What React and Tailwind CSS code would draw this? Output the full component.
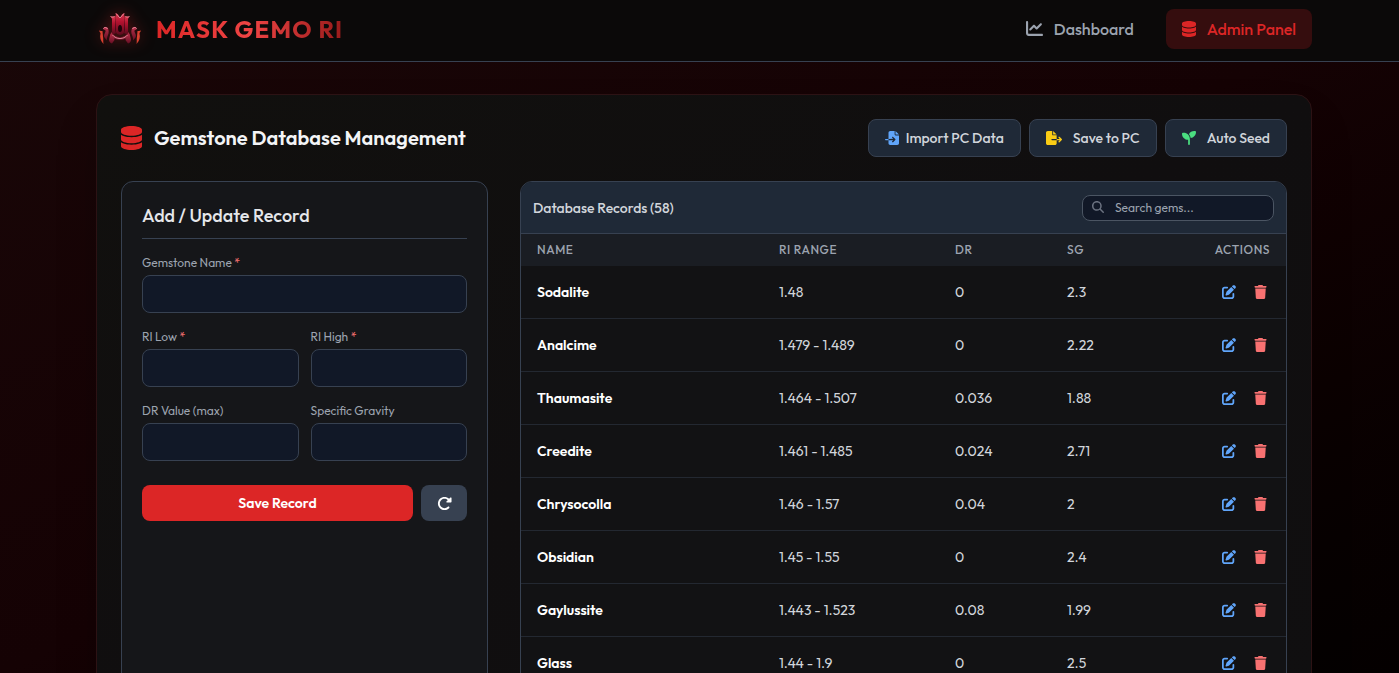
import { useState } from 'react'
import {
  FaChartLine,
  FaDatabase,
  FaFileExport,
  FaFileImport,
  FaMagnifyingGlass,
  FaPenToSquare,
  FaRotateRight,
  FaSeedling,
  FaTrash,
} from 'react-icons/fa6'

const GEMS = [
  { name: 'Sodalite', ri: '1.48', dr: '0', sg: '2.3' },
  { name: 'Analcime', ri: '1.479 - 1.489', dr: '0', sg: '2.22' },
  { name: 'Thaumasite', ri: '1.464 - 1.507', dr: '0.036', sg: '1.88' },
  { name: 'Creedite', ri: '1.461 - 1.485', dr: '0.024', sg: '2.71' },
  { name: 'Chrysocolla', ri: '1.46 - 1.57', dr: '0.04', sg: '2' },
  { name: 'Obsidian', ri: '1.45 - 1.55', dr: '0', sg: '2.4' },
  { name: 'Gaylussite', ri: '1.443 - 1.523', dr: '0.08', sg: '1.99' },
  { name: 'Glass', ri: '1.44 - 1.9', dr: '0', sg: '2.5' },
]

// One half of the mask, mirrored for the other side
function LogoHalf() {
  return (
    <g>
      <path fill="url(#column)" d="M12.5 4c1.500 1 3 .5 5 0L18.500 21l-4 1.500-.5-3V7z" />
      <path fill="url(#column)" d="M17.800 1l2.200 1.500L22 6v17l-3-1-2-4 .5-9z" />
      <path fill="#4a0918" d="M17.200 6l.8 12-1 3.500V9z" />
      <path fill="url(#arm)" d="M13 20c2 3 5 5 9 5.500v2.500c-4 0-7-1.500-9-4z" />
      <path fill="url(#arm)" d="M12.500 21.500c2.500 1.500 4 3.500 4 6.500l-2.500 3.500c-2-.5-3-2-3-4z" />
      <path fill="url(#arm)" d="M9.500 15.500c-2-1-4-.5-4.500 1.500l2.500 1.500c.5 2-2.500 4-1 7l2.500 3c-.5-3 1-5 1.500-7 .5-2.500 0-4.500-1-6z" />
      <path fill="#d8402f" d="M4.500 19c-2 0-3.500-.5-3.500-.5.5 1.500 1.500 2 1.500 3-1 3.500 0 7.500 3 10.500-.5-3 0-5-.5-7.500z" />
      <path stroke="#f0a3ae" strokeWidth="0.8" fill="none" d="M12.500 4.500c1.500 1 3 .5 4 0M18 1.500L22 6M5.500 16.500c1-1.500 3-1.500 4 .5M14.500 23c2 2.500 4.500 3.500 7.500 3.500" />
    </g>
  )
}

function Logo() {
  return (
    <svg viewBox="0 0 44 34" className="h-[34px] w-11 drop-shadow-[0_0_8px_rgba(220,38,38,0.4)]" aria-hidden="true">
      <defs>
        <linearGradient id="column" x1="0" y1="0" x2="0" y2="1">
          <stop offset="0" stopColor="#d93a50" />
          <stop offset="0.4" stopColor="#b3122f" />
          <stop offset="1" stopColor="#5a0b1e" />
        </linearGradient>
        <linearGradient id="arm" x1="0" y1="0" x2="0" y2="1">
          <stop offset="0" stopColor="#b8304a" />
          <stop offset="1" stopColor="#650d22" />
        </linearGradient>
      </defs>
      <LogoHalf />
      <g transform="matrix(-1 0 0 1 44 0)">
        <LogoHalf />
      </g>
      <ellipse cx="22" cy="16.500" rx="2" ry="3.500" fill="#1d0309" />
    </svg>
  )
}

function Field({ id, label, required, type = 'text' }) {
  return (
    <div>
      <label htmlFor={id} className="mb-1 block text-xs text-[#9ca3af]">
        {label} {required && <span className="text-[#f87171]">*</span>}
      </label>
      <input
        id={id}
        type={type}
        step="any"
        className="h-[38px] w-full rounded-lg border border-[#374151] bg-[#111827] px-3 text-sm text-white outline-none focus:border-red-500"
      />
    </div>
  )
}

export default function App() {
  const [search, setSearch] = useState('')
  const rows = GEMS.filter((g) => g.name.toLowerCase().includes(search.toLowerCase()))

  return (
    <div className="h-screen overflow-hidden bg-linear-to-br from-[#190708] via-[#150204] to-[#040000] font-['Outfit','Lato',sans-serif] text-gray-200">
      <header className="border-b border-[#374151] bg-[#0b0909]">
        <div className="flex h-[61px] items-center justify-between pr-[87px] pb-1 pl-[98px]">
          <a href="#" className="flex items-center gap-3.5">
            <Logo />
            <span className="bg-linear-to-r from-[#dc2626] via-[#ef4444] to-[#991b1b] bg-clip-text text-2xl font-bold tracking-wider text-transparent">
              MASK GEMO RI
            </span>
          </a>
          <nav className="flex items-center gap-4 font-medium">
            <a href="#dashboard" className="flex items-center gap-[11px] px-4 py-2 text-[#9ca3af]">
              <FaChartLine size={17} />
              Dashboard
            </a>
            <a href="#admin" className="flex items-center gap-[11px] rounded-lg bg-[#350d0e] px-4 py-2 text-[#dc2626]">
              <FaDatabase className="h-4 w-3.5" />
              Admin Panel
            </a>
          </nav>
        </div>
      </header>

      <main className="pt-8 pr-[87px] pl-24">
        <section className="rounded-2xl border border-[#2c1214] bg-linear-to-br from-[#11100e] via-[#100e0f] to-[#100f10] p-6 shadow-2xl">
          <div className="mb-6 flex items-center justify-between">
            <h1 className="flex items-center gap-3 text-xl font-semibold text-[#f3f4f6]">
              <FaDatabase className="h-6 w-[21px] text-[#dc2626]" />
              Gemstone Database Management
            </h1>
            <div className="flex gap-2 text-sm font-medium text-[#d1d5db]">
              <button className="flex h-[38px] items-center gap-[7px] rounded-lg border border-[#374151] bg-[#1f2937] px-4">
                <FaFileImport size={14} className="text-[#60a5fa]" />
                Import PC Data
              </button>
              <button className="flex h-[38px] items-center gap-[11px] rounded-lg border border-[#374151] bg-[#1f2937] px-4">
                <FaFileExport size={16} className="text-[#facc15]" />
                Save to PC
              </button>
              <button className="flex h-[38px] items-center gap-[11px] rounded-lg border border-[#374151] bg-[#1f2937] px-4">
                <FaSeedling size={14} className="text-[#4ade80]" />
                Auto Seed
              </button>
            </div>
          </div>

          <div className="grid grid-cols-[367px_1fr] gap-8">
            <form className="rounded-xl border border-[#374151] bg-[#151619] p-5">
              <h2 className="mb-4 border-b border-[#374151] pb-2 text-lg font-medium text-[#e5e7eb]">Add / Update Record</h2>
              <div className="grid gap-4">
                <Field id="name" label="Gemstone Name" required />
                <div className="grid grid-cols-2 gap-3">
                  <Field id="ri-low" label="RI Low" required type="number" />
                  <Field id="ri-high" label="RI High" required type="number" />
                </div>
                <div className="grid grid-cols-2 gap-3">
                  <Field id="dr" label="DR Value (max)" type="number" />
                  <Field id="sg" label="Specific Gravity" type="number" />
                </div>
              </div>
              <div className="mt-6 flex gap-2">
                <button type="button" className="h-9 flex-1 rounded-lg bg-[#dc2626] text-sm font-semibold text-white">
                  Save Record
                </button>
                <button type="reset" aria-label="Reset form" className="flex h-9 w-[46px] items-center justify-center rounded-lg bg-[#374151] text-white">
                  <FaRotateRight size={15} />
                </button>
              </div>
            </form>

            <div className="overflow-hidden rounded-xl border border-[#374151] bg-[#121214]">
              <div className="flex h-[52px] items-center justify-between border-b border-[#374151] bg-[#1f2937] px-3">
                <h2 className="text-sm font-medium text-[#d1d5db]">Database Records (58)</h2>
                <div className="relative">
                  <FaMagnifyingGlass size={12} className="absolute top-1.5 left-2.5 text-[#6b7280]" />
                  <input
                    type="text"
                    aria-label="Search gems"
                    placeholder="Search gems..."
                    value={search}
                    onChange={(e) => setSearch(e.target.value)}
                    className="block h-[26px] w-48 rounded-lg border border-[#4b5563] bg-[#111827] pr-3 pl-8 text-xs text-white outline-none placeholder:text-[#9ca3af]"
                  />
                </div>
              </div>
              <table className="w-full table-fixed border-separate border-spacing-0 text-left text-sm">
                <thead className="bg-[#1a1d23] text-xs tracking-wider text-[#9ca3af] uppercase">
                  <tr className="h-8">
                    <th className="w-[242px] px-4 font-medium">Name</th>
                    <th className="w-[176px] px-4 font-medium">RI Range</th>
                    <th className="w-[112px] px-4 font-medium">DR</th>
                    <th className="px-4 font-medium">SG</th>
                    <th className="px-4 text-right font-medium">Actions</th>
                  </tr>
                </thead>
                <tbody className="text-[#d1d5db] [&_td]:border-b [&_td]:border-[#232831]">
                  {rows.map((g) => (
                    <tr key={g.name} className="h-[53px]">
                      <td className="px-4 font-semibold text-white">{g.name}</td>
                      <td className="px-4">{g.ri}</td>
                      <td className="px-4">{g.dr}</td>
                      <td className="px-4">{g.sg}</td>
                      <td className="px-4">
                        <div className="flex items-center justify-end gap-2.5">
                          <button aria-label={`Edit ${g.name}`} className="p-1 text-[#60a5fa]">
                            <FaPenToSquare size={14} />
                          </button>
                          <button aria-label={`Delete ${g.name}`} className="py-1 pr-[3px] pl-1 text-[#f87171]">
                            <FaTrash className="h-3.5 w-[13px]" />
                          </button>
                        </div>
                      </td>
                    </tr>
                  ))}
                </tbody>
              </table>
            </div>
          </div>
        </section>
      </main>
    </div>
  )
}
